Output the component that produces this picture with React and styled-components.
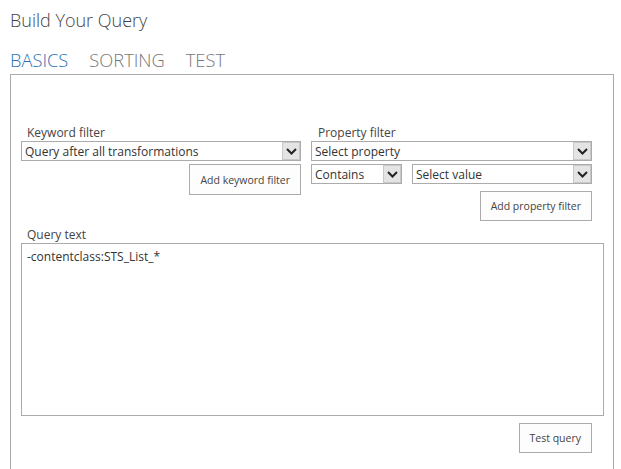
import React from "react";
import styled, { createGlobalStyle } from "styled-components";

const GlobalStyle = createGlobalStyle`
  body {
    margin: 0;
    background: #ffffff;
    font-family: "Open Sans", "Liberation Sans", sans-serif;
    color: #444444;
  }
`;

const Page = styled.div`
  padding: 8px 0 0 10px;
  width: 621px;
  height: 469px;
  box-sizing: border-box;
  overflow: hidden;
`;

const Title = styled.h1`
  margin: 0;
  font-size: 18px;
  font-weight: 300;
  line-height: 24px;
  color: #444444;
`;

const Tabs = styled.div`
  display: flex;
  gap: 21px;
  margin-top: 16px;
  height: 26px;
`;

const Tab = styled.div`
  font-size: 18.3px;
  font-weight: 300;
  line-height: 24px;
  color: ${(p) => (p.$active ? "#2a72b5" : "#777777")};
`;

const Panel = styled.div`
  width: 604px;
  height: 420px;
  box-sizing: border-box;
  border: 1px solid #ababab;
  padding: 49px 9px 0 10px;
`;

const Filters = styled.div`
  display: grid;
  grid-template-columns: 280px 281px;
  column-gap: 10px;
`;

const Column = styled.div`
  display: flex;
  flex-direction: column;
`;

const Label = styled.div`
  font-size: 12px;
  line-height: 17px;
  padding-left: ${(p) => p.$indent || 6}px;
  color: #444444;
`;

const SelectBox = styled.div`
  display: flex;
  align-items: stretch;
  height: 20px;
  width: ${(p) => p.$width || "100%"};
  box-sizing: border-box;
  border: 1px solid #ababab;
  background: #ffffff;
  font-size: 12px;
  color: #333333;
`;

const SelectText = styled.span`
  flex: 1;
  padding-left: 3px;
  line-height: 19px;
  white-space: nowrap;
  overflow: hidden;
`;

const ArrowBox = styled.span`
  width: 18px;
  box-sizing: border-box;
  background: #e4e4e4;
  border: 1px solid #c8c8c8;
  display: flex;
  align-items: center;
  justify-content: center;
`;

const Row = styled.div`
  display: flex;
  gap: 10px;
  margin-top: 3px;
`;

const ButtonRow = styled.div`
  display: flex;
  justify-content: flex-end;
  margin-top: ${(p) => p.$top || 3}px;
`;

const Button = styled.button`
  height: ${(p) => p.$height || 31}px;
  padding: 0 10px;
  box-sizing: border-box;
  border: 1px solid #ababab;
  background: #fdfdfd;
  color: #444444;
  font-family: "Open Sans", "Liberation Sans", sans-serif;
  font-size: 10.5px;
  cursor: pointer;
`;

const QuerySection = styled.div`
  margin-top: 5px;
  width: 583px;
`;

const QueryArea = styled.div`
  height: 173px;
  box-sizing: border-box;
  border: 1px solid #ababab;
  padding: 4px 5px;
  font-size: 12px;
  line-height: 18px;
  color: #333333;
`;

const Footer = styled.div`
  width: 571px;
  display: flex;
  justify-content: flex-end;
  margin-top: 7px;
`;

const Chevron = () => (
  <svg width="11" height="7" viewBox="0 0 11 7">
    <path d="M1 1 L5.5 5.5 L10 1" fill="none" stroke="#222" strokeWidth="2" />
  </svg>
);

const Select = ({ children, width }) => (
  <SelectBox $width={width}>
    <SelectText>{children}</SelectText>
    <ArrowBox>
      <Chevron />
    </ArrowBox>
  </SelectBox>
);

export default function App() {
  return (
    <>
      <GlobalStyle />
      <Page>
        <Title>Build Your Query</Title>
        <Tabs>
          <Tab $active>BASICS</Tab>
          <Tab>SORTING</Tab>
          <Tab>TEST</Tab>
        </Tabs>
        <Panel>
          <Filters>
            <Column>
              <Label>Keyword filter</Label>
              <Select>Query after all transformations</Select>
              <ButtonRow>
                <Button>Add keyword filter</Button>
              </ButtonRow>
            </Column>
            <Column>
              <Label $indent={7}>Property filter</Label>
              <Select>Select property</Select>
              <Row>
                <Select width="91px">Contains</Select>
                <Select width="180px">Select value</Select>
              </Row>
              <ButtonRow $top={7}>
                <Button $height={30}>Add property filter</Button>
              </ButtonRow>
            </Column>
          </Filters>
          <QuerySection>
            <Label>Query text</Label>
            <QueryArea>-contentclass:STS_List_*</QueryArea>
          </QuerySection>
          <Footer>
            <Button $height={30}>Test query</Button>
          </Footer>
        </Panel>
      </Page>
    </>
  );
}
